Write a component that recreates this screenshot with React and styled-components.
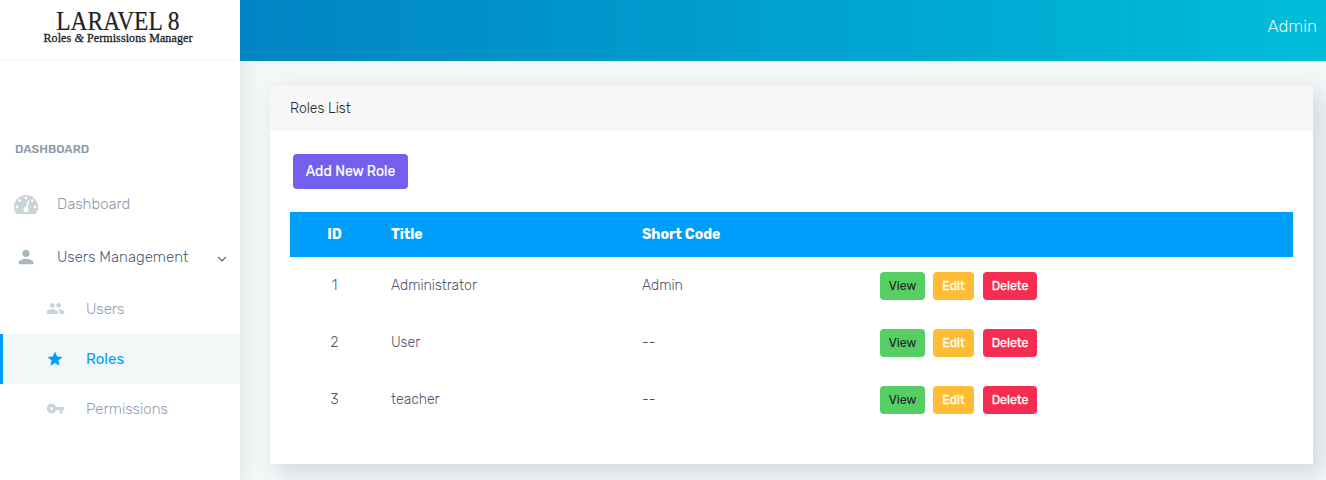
import React from 'react';
import styled, { createGlobalStyle } from 'styled-components';
import { MdPerson, MdPeople, MdStar, MdVpnKey } from 'react-icons/md';

const GlobalStyle = createGlobalStyle`
  * { box-sizing: border-box; }
  body {
    margin: 0;
    background: #f2f7f8;
    font-family: Rubik, Roboto, sans-serif;
    font-size: 14px;
    font-weight: 300;
    color: #3e5569;
    overflow: hidden;
  }
`;

const Page = styled.div`
  display: grid;
  grid-template-columns: 240px 1fr;
  height: 480px;
  overflow: hidden;
`;

const Sidebar = styled.aside`
  display: flex;
  flex-direction: column;
  background: #fff;
  box-shadow: 1px 0 20px rgba(0, 0, 0, 0.1);
`;

const Brand = styled.div`
  display: flex;
  flex-direction: column;
  align-items: center;
  height: 61px;
  padding: 11px 4px 0 0;
  border-bottom: 1px solid #f8f8f8;
  font-family: "Source Serif Pro", "Liberation Serif", serif;
  font-weight: 400;
  color: #222;
  white-space: nowrap;
`;

const BrandName = styled.div`
  font-size: 27px;
  line-height: 21px;
  transform: scaleX(0.87);
  -webkit-text-stroke: 0.2px #222;
`;

const BrandTagline = styled.div`
  font-size: 12px;
  line-height: 13px;
  letter-spacing: 0.1px;
  -webkit-text-stroke: 0.3px #222;
`;

const NavHeading = styled.div`
  margin-top: 78px;
  padding-left: 15px;
  font-size: 12px;
  font-weight: 500;
  line-height: 20px;
  color: #8898a8;
`;

const NavItem = styled.a`
  display: flex;
  align-items: center;
  height: 53px;
  font-size: 15px;
  color: ${(p) => (p.$open ? '#4d5f78' : '#8d97ad')};

  &:first-of-type { margin-top: 18px; }
  &:nth-of-type(2) { margin-bottom: 1px; }
`;

const NavIcon = styled.span`
  display: flex;
  justify-content: center;
  width: 52px;
  margin-right: 5px;
  padding-top: ${(p) => (p.$open ? '0' : '2px')};
  color: ${(p) => (p.$open ? '#a6b7bf' : '#c9d3d8')};
`;

const Caret = styled.svg`
  margin: 4px 13px 0 auto;
`;

const SubItem = styled.a`
  display: flex;
  align-items: center;
  height: 50px;
  padding-left: ${(p) => (p.$active ? '42px' : '45px')};
  border-left: ${(p) => (p.$active ? '3px solid #009efb' : '0')};
  background: ${(p) => (p.$active ? '#f2f7f8' : 'transparent')};
  font-size: 15px;
  font-weight: ${(p) => (p.$active ? 400 : 300)};
  color: ${(p) => (p.$active ? '#009efb' : '#949eb2')};
`;

const SubIcon = styled.span`
  display: flex;
  justify-content: center;
  width: 20px;
  margin: -1px 21px 0 0;
  color: ${(p) => (p.$active ? '#009efb' : '#c9d3d8')};
`;

const Main = styled.main`
  min-width: 0;
`;

const TopBar = styled.header`
  position: relative;
  display: flex;
  justify-content: flex-end;
  align-items: center;
  height: 61px;
  padding: 0 9px 9px 0;
  background: linear-gradient(to right, #0184c4 0%, #00bdda 100%);
  font-size: 17px;
  color: rgba(255, 255, 255, 0.9);
`;

const Card = styled.section`
  height: 378px;
  margin: 25px 13px 0 30px;
  background: #fff;
  box-shadow: 8px 8px 20px rgba(62, 85, 85, 0.18);
`;

const CardHeader = styled.div`
  height: 45px;
  padding-left: 20px;
  background: #f7f7f7;
  line-height: 45px;
  color: #212529;
`;

const CardBody = styled.div`
  padding: 23px 20px 0;
`;

const AddButton = styled.button`
  display: block;
  width: 115px;
  height: 35px;
  margin: 0 0 23px 3px;
  padding: 0;
  border: 0;
  border-radius: 4px;
  background: #7460ee;
  font: 400 14px/35px Rubik, Roboto, sans-serif;
  color: #fff;
  -webkit-text-stroke: 0.2px #fff;
`;

const Row = styled.div`
  display: grid;
  grid-template-columns: 89px 251px 238px 1fr;
  align-items: center;
  height: 57px;
  padding-left: 12px;
  color: #4f5467;
`;

const HeadRow = styled(Row)`
  height: 45px;
  background: #009efb;
  font-weight: 700;
  color: #fff;
`;

const IdCell = styled.span`
  width: 65px;
  text-align: center;
`;

const Actions = styled.div`
  display: flex;
`;

const actionStyles = {
  View: { bg: '#55ce63', fg: '#212529', width: 45, gap: 8, stroke: 0 },
  Edit: { bg: '#ffbc34', fg: '#fff', width: 41, gap: 9, stroke: 0.3 },
  Delete: { bg: '#f62d51', fg: '#fff', width: 54, gap: 0, stroke: 0.3 },
};

const ActionButton = styled.button`
  width: ${(p) => actionStyles[p.$kind].width}px;
  height: 28px;
  margin: 0 ${(p) => actionStyles[p.$kind].gap}px 0 0;
  padding: 0;
  border: 0;
  border-radius: 4px;
  background: ${(p) => actionStyles[p.$kind].bg};
  font: 400 12.25px/28px Rubik, Roboto, sans-serif;
  color: ${(p) => actionStyles[p.$kind].fg};
  -webkit-text-stroke: ${(p) => actionStyles[p.$kind].stroke}px #fff;
`;

const roles = [
  { id: 1, title: 'Administrator', code: 'Admin' },
  { id: 2, title: 'User', code: '--' },
  { id: 3, title: 'teacher', code: '--' },
];

function GaugeIcon() {
  return (
    <svg width="24" height="19" viewBox="0 0 24 19">
      <path
        fill="currentColor"
        d="M12 0A12 12 0 0 0 0 12c0 2.200.6 4.300 1.700 6.100.4.600.9.900 1.600.900h17.400c.7 0 1.200-.3 1.600-.9A12 12 0 0 0 12 0Z"
      />
      <g fill="#fff">
        <circle cx="3" cy="12" r="1.400" />
        <circle cx="5.700" cy="5.600" r="1.400" />
        <circle cx="12" cy="2.800" r="1.400" />
        <circle cx="18.400" cy="5.600" r="1.400" />
        <circle cx="21" cy="12" r="1.400" />
        <circle cx="12" cy="14.600" r="2.600" />
      </g>
      <path d="M12.400 13.500 14.600 6" stroke="#fff" strokeWidth="1.500" strokeLinecap="round" />
    </svg>
  );
}

export default function App() {
  return (
    <Page>
      <GlobalStyle />
      <Sidebar>
        <Brand>
          <BrandName>LARAVEL 8</BrandName>
          <BrandTagline>Roles <i>&amp;</i> Permissions Manager</BrandTagline>
        </Brand>
        <NavHeading>DASHBOARD</NavHeading>
        <NavItem>
          <NavIcon><GaugeIcon /></NavIcon>
          Dashboard
        </NavItem>
        <NavItem $open>
          <NavIcon $open><MdPerson size={22} /></NavIcon>
          Users Management
          <Caret width="10" height="6" viewBox="0 0 10 6" fill="none" stroke="#4d5f78" strokeWidth="1.2">
            <path d="M1 .8 5 4.8 9 .8" />
          </Caret>
        </NavItem>
        <SubItem>
          <SubIcon><MdPeople size={19} /></SubIcon>
          Users
        </SubItem>
        <SubItem $active>
          <SubIcon $active><MdStar size={18} /></SubIcon>
          Roles
        </SubItem>
        <SubItem>
          <SubIcon><MdVpnKey size={19} /></SubIcon>
          Permissions
        </SubItem>
      </Sidebar>
      <Main>
        <TopBar>Admin</TopBar>
        <Card>
          <CardHeader>Roles List</CardHeader>
          <CardBody>
            <AddButton>Add New Role</AddButton>
            <HeadRow>
              <IdCell>ID</IdCell>
              <span>Title</span>
              <span>Short Code</span>
            </HeadRow>
            {roles.map((role) => (
              <Row key={role.id}>
                <IdCell>{role.id}</IdCell>
                <span>{role.title}</span>
                <span>{role.code}</span>
                <Actions>
                  <ActionButton $kind="View">View</ActionButton>
                  <ActionButton $kind="Edit">Edit</ActionButton>
                  <ActionButton $kind="Delete">Delete</ActionButton>
                </Actions>
              </Row>
            ))}
          </CardBody>
        </Card>
      </Main>
    </Page>
  );
}
